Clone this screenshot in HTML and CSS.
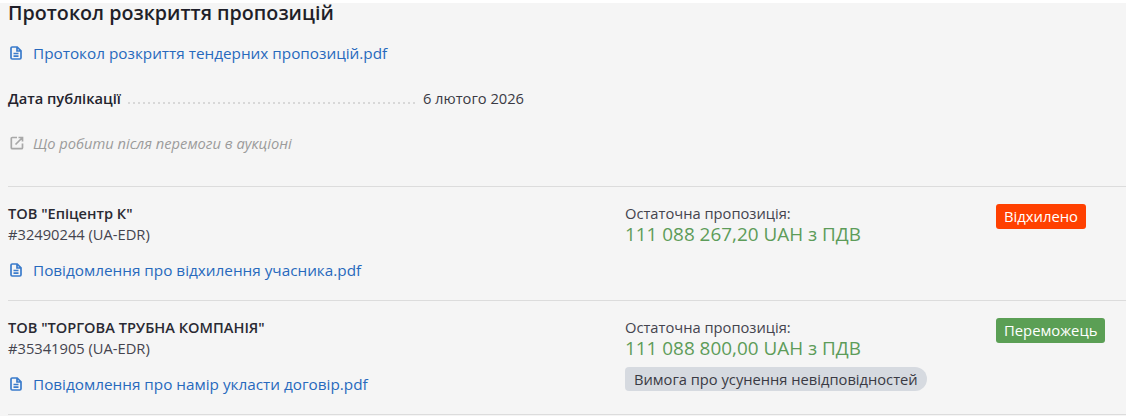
FILE: index.html
```html
<!DOCTYPE html>
<html lang="uk">
<head>
<meta charset="utf-8">
<title>Протокол розкриття пропозицій</title>
<link rel="stylesheet" href="styles.css">
</head>
<body>
<main class="panel">
  <h2 class="title">Протокол розкриття пропозицій</h2>
  <a class="doc doc-top" href="#">
    <svg class="icon" viewBox="0 0 12 14" aria-hidden="true"><path d="M2.200 1h5l3.800 3.800v7a1.200 1.200 0 0 1-1.200 1.200H2.200A1.200 1.200 0 0 1 1 11.800V2.200A1.200 1.200 0 0 1 2.200 1z M7 1v4h4 M3.500 7.500h5 M3.500 10.200h5" /></svg>
    <span>Протокол розкриття тендерних пропозицій.pdf</span>
  </a>
  <div class="meta">
    <span class="meta-label">Дата публікації</span>
    <span class="meta-dots"></span>
    <span class="meta-value">6 лютого 2026</span>
  </div>
  <a class="help" href="#">
    <svg class="icon-ext" viewBox="0 0 14 14" aria-hidden="true"><path d="M7 1.500H2.300a1 1 0 0 0-1 1v9.200a1 1 0 0 0 1 1h9.200a1 1 0 0 0 1-1V7.500 M5.500 8.500 12 2 M8.500 1.500h4v4" /></svg>
    <span>Що робити після перемоги в аукціоні</span>
  </a>
  <section class="bidder">
    <div class="bidder-info">
      <div class="bidder-name">ТОВ "Епіцентр К"</div>
      <div class="bidder-id">#32490244 (UA-EDR)</div>
      <a class="doc doc-bid" href="#">
        <svg class="icon" viewBox="0 0 12 14" aria-hidden="true"><path d="M2.200 1h5l3.800 3.800v7a1.200 1.200 0 0 1-1.200 1.200H2.200A1.200 1.200 0 0 1 1 11.800V2.200A1.200 1.200 0 0 1 2.200 1z M7 1v4h4 M3.500 7.500h5 M3.500 10.200h5" /></svg>
        <span>Повідомлення про відхилення учасника.pdf</span>
      </a>
    </div>
    <div class="bidder-offer">
      <div class="offer-label">Остаточна пропозиція:</div>
      <div class="offer-value">111 088 267,20 UAH з ПДВ</div>
    </div>
    <div class="bidder-status"><span class="badge badge-red">Відхилено</span></div>
  </section>
  <section class="bidder">
    <div class="bidder-info">
      <div class="bidder-name">ТОВ "ТОРГОВА ТРУБНА КОМПАНІЯ"</div>
      <div class="bidder-id">#35341905 (UA-EDR)</div>
      <a class="doc doc-bid" href="#">
        <svg class="icon" viewBox="0 0 12 14" aria-hidden="true"><path d="M2.200 1h5l3.800 3.800v7a1.200 1.200 0 0 1-1.200 1.200H2.200A1.200 1.200 0 0 1 1 11.800V2.200A1.200 1.200 0 0 1 2.200 1z M7 1v4h4 M3.500 7.500h5 M3.500 10.200h5" /></svg>
        <span>Повідомлення про намір укласти договір.pdf</span>
      </a>
    </div>
    <div class="bidder-offer">
      <div class="offer-label">Остаточна пропозиція:</div>
      <div class="offer-value">111 088 800,00 UAH з ПДВ</div>
      <span class="pill">Вимога про усунення невідповідностей</span>
    </div>
    <div class="bidder-status"><span class="badge badge-green">Переможець</span></div>
  </section>
</main>
</body>
</html>
```
FILE: styles.css
```css
* { box-sizing: border-box; }
html, body { margin: 0; padding: 0; background: #fff; }
body { font-family: "Open Sans", "Noto Sans", sans-serif; font-size: 14.7px; color: #2a2a33; }
.panel { height: 413px; margin-top: 3px; padding-left: 8px; background: #f5f5f5; }
.title { margin: 0; font-size: 19.7px; line-height: 20px; font-weight: 600; color: #1f1f29; }
a { text-decoration: none; }
.doc { display: flex; align-items: center; color: #2769bd; font-size: 15.3px; font-weight: 500; line-height: 20px; }
.icon { width: 12px; height: 14px; margin: 0 11px 0 2px; flex: none; fill: none; stroke: #3a7bcb; stroke-width: 1.700; }
.doc-top { margin-top: 20px; }
.meta { display: flex; align-items: baseline; margin-top: 25px; line-height: 20px; width: 516px; }
.meta-label { font-weight: 600; color: #23232d; }
.meta-dots { flex: 1; height: 2px; margin: 0 8px 0 7px; background: repeating-linear-gradient(90deg, #d8d8d8 0 2px, transparent 2px 5px); }
.meta-value { color: #3a3a44; }
.help { display: flex; align-items: center; margin-top: 25px; color: #9b9b9b; font-style: italic; line-height: 20px; }
.icon-ext { width: 14px; height: 14px; margin: 0 9px 0 2px; flex: none; fill: none; stroke: #a8a8a8; stroke-width: 1.700; }
.bidder { display: flex; height: 114px; padding-top: 16px; border-top: 1px solid #dcdcdc; }
.help + .bidder { margin-top: 33px; }
.bidder:last-child { border-bottom: 1px solid #dcdcdc; height: 115px; }
.bidder-info { width: 617px; flex: none; }
.bidder-name { font-weight: 600; font-size: 14.6px; line-height: 20px; color: #2a2a33; }
.bidder-id { line-height: 22px; color: #44444e; }
.doc-bid { margin-top: 15px; }
.bidder-offer { width: 371px; flex: none; }
.offer-label { line-height: 20px; color: #44444e; }
.offer-value { font-size: 18.9px; line-height: 23px; color: #5d9c59; }
.pill { display: inline-block; margin-top: 7px; padding: 0 9px; height: 24px; line-height: 24px; background: #d6dae0; border-radius: 4px 12px 12px 4px; color: #3a3a44; }
.bidder-status { padding-top: 1px; }
.badge { display: inline-block; height: 25px; line-height: 25px; padding: 0 8px; border-radius: 3px; color: #fff; font-size: 14.8px; }
.badge-red { background: #ff4000; }
.badge-green { background: #5b9f55; }
```
